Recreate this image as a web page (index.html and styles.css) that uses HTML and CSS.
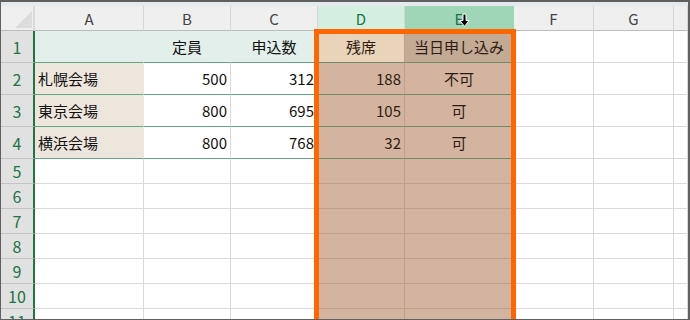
FILE: index.html
```html
<!DOCTYPE html>
<html lang="ja">
<head>
<meta charset="UTF-8" />
<meta name="viewport" content="width=device-width, initial-scale=1" />
<title>会場一覧</title>
<link rel="stylesheet" href="styles.css">
</head>
<body>
  <div class="sheet">
    <!-- 列見出し -->
    <div class="row head">
      <div class="corner"><span class="tri"></span></div>
      <div class="ch">A</div>
      <div class="ch">B</div>
      <div class="ch">C</div>
      <div class="ch sel">D</div>
      <div class="ch hot">E</div>
      <div class="ch">F</div>
      <div class="ch">G</div>
      <div class="ch"></div>
    </div>

    <div class="row tall">
      <div class="rh">1</div>
      <div class="c tbl title"></div>
      <div class="c tbl title mid">定員</div>
      <div class="c tbl title mid">申込数</div>
      <div class="c pk pk-d1 mid">残席</div>
      <div class="c pk pk-e1 mid">当日申し込み</div>
      <div class="c"></div><div class="c"></div><div class="c"></div>
    </div>
    <div class="row tall">
      <div class="rh">2</div>
      <div class="c tbl name">札幌会場</div>
      <div class="c tbl num">500</div>
      <div class="c tbl num">312</div>
      <div class="c pk num">188</div>
      <div class="c pk mid">不可</div>
      <div class="c"></div><div class="c"></div><div class="c"></div>
    </div>
    <div class="row tall">
      <div class="rh">3</div>
      <div class="c tbl name">東京会場</div>
      <div class="c tbl num">800</div>
      <div class="c tbl num">695</div>
      <div class="c pk num">105</div>
      <div class="c pk mid">可</div>
      <div class="c"></div><div class="c"></div><div class="c"></div>
    </div>
    <div class="row tall">
      <div class="rh">4</div>
      <div class="c tbl name">横浜会場</div>
      <div class="c tbl num">800</div>
      <div class="c tbl num">768</div>
      <div class="c pk num">32</div>
      <div class="c pk mid">可</div>
      <div class="c"></div><div class="c"></div><div class="c"></div>
    </div>

    <div class="row"><div class="rh">5</div><div class="c"></div><div class="c"></div><div class="c"></div><div class="c pk lo"></div><div class="c pk lo"></div><div class="c"></div><div class="c"></div><div class="c"></div></div>
    <div class="row"><div class="rh">6</div><div class="c"></div><div class="c"></div><div class="c"></div><div class="c pk lo"></div><div class="c pk lo"></div><div class="c"></div><div class="c"></div><div class="c"></div></div>
    <div class="row"><div class="rh">7</div><div class="c"></div><div class="c"></div><div class="c"></div><div class="c pk lo"></div><div class="c pk lo"></div><div class="c"></div><div class="c"></div><div class="c"></div></div>
    <div class="row"><div class="rh">8</div><div class="c"></div><div class="c"></div><div class="c"></div><div class="c pk lo"></div><div class="c pk lo"></div><div class="c"></div><div class="c"></div><div class="c"></div></div>
    <div class="row"><div class="rh">9</div><div class="c"></div><div class="c"></div><div class="c"></div><div class="c pk lo"></div><div class="c pk lo"></div><div class="c"></div><div class="c"></div><div class="c"></div></div>
    <div class="row"><div class="rh">10</div><div class="c"></div><div class="c"></div><div class="c"></div><div class="c pk lo"></div><div class="c pk lo"></div><div class="c"></div><div class="c"></div><div class="c"></div></div>
    <div class="row"><div class="rh">11</div><div class="c"></div><div class="c"></div><div class="c"></div><div class="c pk lo"></div><div class="c pk lo"></div><div class="c"></div><div class="c"></div><div class="c"></div></div>

    <!-- D〜E列の囲み枠 -->
    <div class="frame"></div>

    <!-- 列選択カーソル -->
    <svg class="cursor" width="11" height="15" viewBox="0 0 11 15">
      <path d="M4 1 H7 V7.5 H10 L5.5 13.5 L1 7.5 H4 Z" fill="#000" stroke="#fff" stroke-width="1" stroke-linejoin="round"/>
    </svg>
  </div>
</body>
</html>
```

FILE: styles.css
```css
* { box-sizing: border-box; }
body { margin: 0; background: #fff; }

.sheet {
  --cols: 34px 109px 87px 87px 87px 109px 80px 80px 1fr;
  position: relative;
  width: 690px;
  height: 320px;
  overflow: hidden;
  border-style: solid;
  border-color: #606060;
  border-width: 2px 2px 1px 1px;
  font-family: "Noto Sans CJK JP", "Noto Sans", sans-serif;
  font-size: 15px;
  color: #111;
}

.row { display: grid; grid-template-columns: var(--cols); height: 25px; }
.row.tall { height: 32px; }
.row.head { height: 29px; padding-top: 4px; background: #e4eaee; }

/* 見出し */
.corner {
  display: flex;
  justify-content: flex-end;
  align-items: flex-end;
  padding: 0 1px 2px 0;
  background: #efefef;
  border-right: 2px solid #d9d9d9;
  border-bottom: 1px solid #bdbdbd;
}
.tri {
  width: 0;
  height: 0;
  border-left: 17px solid transparent;
  border-bottom: 17px solid #dcdcdc;
}
.ch {
  display: flex;
  align-items: center;
  justify-content: center;
  background: #efefef;
  color: #444;
  border-right: 1px solid #d6d6d6;
  border-bottom: 1px solid #bdbdbd;
}
.ch.sel { background: #d3efe0; color: #217346; }
.ch.hot { background: #a0d6b8; color: #217346; border-right-color: #a0d6b8; }

.rh {
  display: flex;
  align-items: center;
  justify-content: center;
  font-size: 16px;
  background: #e1e1e1;
  color: #217346;
  border-right: 2px solid #217346;
  border-bottom: 1px solid #c4c4c4;
}

/* セル */
.c {
  display: flex;
  align-items: center;
  padding: 0 3px;
  white-space: nowrap;
  border-right: 1px solid #dadada;
  border-bottom: 1px solid #dadada;
}
.mid { justify-content: center; }
.num { justify-content: flex-end; }

.tbl { border-bottom-color: #63a883; }
.title { background: #e2efea; border-right-color: #e2efea; }
.name { background: #ede6dc; border-right-color: #ede6dc; }

.pk { background: #d3b4a0; color: #2e1c10; border-right-color: #bf9f8a; border-bottom-color: #6f8b68; }
.pk.lo { border-bottom-color: #bf9f8a; }
.pk-d1 { background: #e9d4bb; }
.pk-e1 { background: #c2aa95; }

.frame {
  position: absolute;
  left: 313px;
  top: 27px;
  width: 202px;
  height: 320px;
  border: 5px solid #ff6600;
}

.cursor { position: absolute; left: 458px; top: 11px; }
```
